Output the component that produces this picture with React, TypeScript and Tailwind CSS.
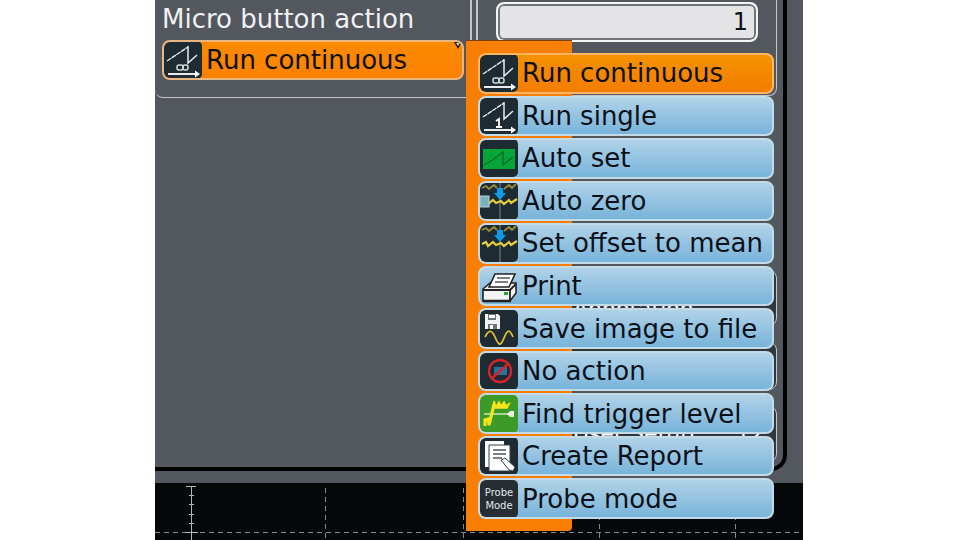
import type { ReactNode } from "react";

type Action = {
  label: string;
  icon: ReactNode;
};

function Tile({ fill = "#1e2b33", children }: { fill?: string; children: ReactNode }) {
  return (
    <svg viewBox="0 0 38 38" className="size-[38px] shrink-0" aria-hidden="true">
      <rect width="38" height="38" rx="5" fill={fill} />
      {children}
    </svg>
  );
}

function Ramp() {
  return (
    <g fill="none" stroke="#e8ecee">
      <path d="M3 20 L24 6" strokeWidth="1.4" strokeDasharray="5 0.6" />
      <path d="M24 5 V22 L33 14" strokeWidth="1.5" />
      <path d="M4 33 H33" strokeWidth="2" />
      <path d="M31 29.500 L36 33 L31 36.500 Z" fill="#ffffff" stroke="none" />
    </g>
  );
}

function ContinuousIcon() {
  return (
    <Tile>
      <Ramp />
      <g fill="none" stroke="#d5dadd" strokeWidth="1.5">
        <rect x="13" y="24" width="6" height="5" rx="2" />
        <rect x="19" y="24" width="5" height="5" rx="2" />
      </g>
    </Tile>
  );
}

function SingleIcon() {
  return (
    <Tile>
      <Ramp />
      <path d="M16 24 L19 22 V30 M16 30 H22" fill="none" stroke="#ffffff" strokeWidth="1.8" />
    </Tile>
  );
}

function AutoSetIcon() {
  return (
    <Tile>
      <rect x="3" y="10" width="32" height="20" fill="#05a838" />
      <path d="M4 26 L14 20 L23 13 V26 L33 18" fill="none" stroke="#0b6a2c" strokeWidth="1.4" />
      <path d="M4 20 H33" stroke="#0d8a2c" strokeDasharray="2 2" />
    </Tile>
  );
}

function OffsetIcon({ marker = false }: { marker?: boolean }) {
  return (
    <Tile>
      <path
        d="M2 6 L6 4 L9 7 L14 3 L17 6 M24 7 L29 3 L32 6 L36 2"
        fill="none"
        stroke="#9a8a3a"
        strokeWidth="1.8"
      />
      <path d="M20 0 V38" stroke="#7c878c" />
      <path d="M17 6 H23 V11 H26 L20 18 L14 11 H17 Z" fill="#0d9be8" />
      <path
        d="M2 20 L6 18 L8 22 L13 18 L16 21 L21 19 L24 22 L29 18 L31 21 L37 17"
        fill="none"
        stroke="#e8cf3a"
        strokeWidth="2.2"
      />
      {marker && <rect x="0" y="14" width="9" height="11" fill="#7db0bd" stroke="#b5d3da" />}
    </Tile>
  );
}

function PrintIcon() {
  return (
    <Tile fill="none">
      <path d="M3 22 L10 16 H36 V26 L30 34 H3 Z" fill="#f4f4f4" stroke="#222" strokeWidth="1.6" />
      <path d="M9 20 L15 7 H35 L29 20 Z" fill="#ffffff" stroke="#222" strokeWidth="1.6" />
      <path d="M17 11 H30 M15 15 H28" stroke="#555" strokeWidth="1.3" />
      <path d="M3 23 H30 L36 17 M30 23 V34" fill="none" stroke="#222" strokeWidth="1.8" />
      <path d="M3 34 H31" stroke="#222" strokeWidth="2.5" />
      <rect x="24" y="25" width="4" height="3" fill="#23a52e" />
    </Tile>
  );
}

function SaveIcon() {
  return (
    <Tile>
      <path d="M5 4 H18 L20 6 V19 H5 Z" fill="#f1f3f4" />
      <path d="M8 4 H16 V10 H8 Z M8 14 H17 V19 H8 Z" fill="#6a747a" />
      <rect x="9" y="5" width="6" height="3" fill="#ffffff" />
      <rect x="10" y="15" width="3" height="4" fill="#ffffff" />
      <path
        d="M5 27 C9 19 12 20 15 27 S20 38 24 28 S30 20 33 27"
        fill="none"
        stroke="#dfbd35"
        strokeWidth="1.8"
      />
    </Tile>
  );
}

function NoActionIcon() {
  return (
    <Tile>
      <rect x="14" y="15" width="13" height="8" fill="#23739f" />
      <circle cx="20" cy="19" r="11" fill="none" stroke="#d5232b" strokeWidth="2.4" />
      <path d="M12 26 L28 12" stroke="#d5232b" strokeWidth="2.4" />
    </Tile>
  );
}

function TriggerIcon() {
  return (
    <Tile fill="#3c9a28">
      <path d="M4 19 H29" stroke="#d2e6bd" strokeWidth="1.4" />
      <path d="M5 31 V25 L8 24 L9 30 L12 18 L14 9" fill="none" stroke="#f2e51c" strokeWidth="3.2" />
      <path
        d="M13 13 L14 6 L16 12 L19 7 L21 11 L24 7 L26 11 L29 9 L27 13 H14"
        fill="#f2e51c"
        stroke="#f2e51c"
        strokeWidth="1.6"
      />
      <path d="M27 19 L30 16 H34 V22 H30 Z" fill="#eef5e6" />
    </Tile>
  );
}

function ReportIcon() {
  return (
    <Tile>
      <path d="M5 4 H24 V30 H5 Z" fill="#ffffff" />
      <path d="M9 8 H30 V34 H9 Z" fill="#ffffff" stroke="#34424b" />
      <path d="M13 13 H26 M13 17 H26 M13 21 H22" stroke="#4d5961" strokeWidth="1.6" />
      <path d="M21 23 L25 21 L35 30 L33 34 L29 33 Z" fill="#ffffff" stroke="#34424b" />
    </Tile>
  );
}

function ProbeIcon() {
  return (
    <span
      aria-hidden="true"
      className="flex size-[38px] shrink-0 flex-col justify-center rounded-[5px] bg-[#272e33] text-center text-[10px] leading-[13px] text-gray-200"
    >
      <span>Probe</span>
      <span>Mode</span>
    </span>
  );
}

const actions: Action[] = [
  { label: "Run continuous", icon: <ContinuousIcon /> },
  { label: "Run single", icon: <SingleIcon /> },
  { label: "Auto set", icon: <AutoSetIcon /> },
  { label: "Auto zero", icon: <OffsetIcon marker /> },
  { label: "Set offset to mean", icon: <OffsetIcon /> },
  { label: "Print", icon: <PrintIcon /> },
  { label: "Save image to file", icon: <SaveIcon /> },
  { label: "No action", icon: <NoActionIcon /> },
  { label: "Find trigger level", icon: <TriggerIcon /> },
  { label: "Create Report", icon: <ReportIcon /> },
  { label: "Probe mode", icon: <ProbeIcon /> },
];

function ActionMenu({ selected }: { selected: string }) {
  return (
    <div role="menu" aria-label="Micro button action" className="absolute top-0 left-full z-10 ml-0.5 w-[308px]">
      <div className="absolute inset-y-0 left-0 w-[106px] rounded-br border-t border-[#7a4010] bg-[#f97e04]" />
      <div className="relative grid h-[491px] auto-rows-fr gap-0.5 pt-[13px] pb-3 pl-3">
        {actions.map((action) => (
          <button
            key={action.label}
            role="menuitem"
            className={`flex min-h-0 items-center gap-1 overflow-hidden rounded-lg border-2 pr-2 text-left whitespace-nowrap ${
              action.label === selected
                ? "border-[#ffb765] bg-linear-to-b from-[#f59200] to-[#f47c00]"
                : "border-[#c3dbe8] bg-linear-to-b from-[#b0d2e7] to-[#78b4da]"
            }`}
          >
            {action.icon}
            {action.label}
          </button>
        ))}
      </div>
    </div>
  );
}

function Graticule() {
  return (
    <svg className="block h-[57px] w-full bg-[#07080a]" aria-hidden="true">
      <g stroke="#85888b" strokeDasharray="5 4" fill="none">
        <path d="M0 49.500 H1000" />
        <path d="M170.500 5 V57 M308.500 5 V57 M444.500 5 V57 M580.500 5 V57" />
      </g>
      <path
        d="M36.500 3 V57 M31 3.500 H41 M30 49.500 H43 M34 12.500 H39 M34 21.500 H39 M34 31.500 H39 M34 40.500 H39"
        stroke="#b4b6b8"
      />
    </svg>
  );
}

export default function App() {
  return (
    <main className="min-h-screen overflow-hidden bg-white pr-[157px] pl-[155px] font-['DejaVu_Sans',Verdana,sans-serif] text-[26px] leading-8 text-[#0c1119]">
      <div className="bg-[#53575e] pr-4 pb-3">
        <div className="flex h-[471px] rounded-br-2xl border-r-4 border-b-4 border-black pr-1.5">
          <section className="w-[317px] shrink-0">
            <div className="h-[98px] rounded-bl-lg border-r-2 border-b border-[#c4c6ca] pt-[3px] pl-[7px]">
              <h2 id="micro-label" className="h-[37px] text-[#f0f1f3]">
                Micro button action
              </h2>
              <div className="relative w-[302px]">
                <button
                  aria-labelledby="micro-label"
                  aria-haspopup="menu"
                  aria-expanded="true"
                  className="flex h-10 w-full items-center gap-1 overflow-hidden rounded-lg border-2 border-[#eab783] bg-linear-to-b from-[#fb8b00] to-[#fb8100] text-left whitespace-nowrap"
                >
                  <ContinuousIcon />
                  <span className="grow">Run continuous</span>
                  <svg viewBox="0 0 8 8" className="size-2 self-start" aria-hidden="true">
                    <path d="M0 0 H8 L4 7 Z" fill="#1c1c1c" />
                    <path d="M2 1 H6 L4 4 Z" fill="#d0d0d0" />
                  </svg>
                </button>
                <ActionMenu selected="Run continuous" />
              </div>
            </div>
          </section>
          <section className="ml-1 flex grow flex-col">
            <div className="h-24 rounded-b-lg border-r border-b border-l-2 border-[#c4c6ca] pt-0.5 pr-[18px] pl-[18px]">
              <input
                aria-label="Number"
                defaultValue="1"
                className="h-10 w-full rounded-lg border-2 border-[#f4f4f5] bg-[#e4e4e6] pr-2 text-right text-[24px] inset-ring-2 inset-ring-[#717478]"
              />
            </div>
            <div className="mt-[174px] flex flex-col gap-4 text-[22px] text-white">
              <button className="flex h-14 items-end rounded-lg border border-[#c4c6ca] bg-[#32373e] pr-3 pl-24">
                Annotation
              </button>
              <button className="h-12 rounded-lg border border-[#c4c6ca] bg-[#32373e]" aria-label="Cursor" />
              <button className="flex h-14 items-center justify-between rounded-lg border border-[#c4c6ca] bg-[#32373e] pr-3 pl-24">
                <span>User Setup</span>
                <span>12</span>
              </button>
            </div>
          </section>
        </div>
      </div>
      <Graticule />
    </main>
  );
}
